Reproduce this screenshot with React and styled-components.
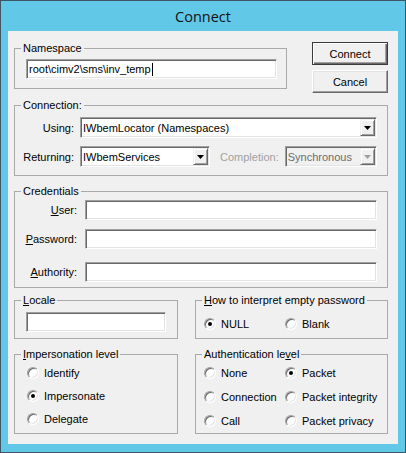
import React from 'react';
import styled, { createGlobalStyle } from 'styled-components';

const GlobalStyle = createGlobalStyle`
    body {
        margin: 0;
        font-family: "Liberation Sans", Arial, sans-serif;
        font-size: 11px;
        color: #000;
    }
`;

const Window = styled.div`
    width: 406px;
    height: 453px;
    box-sizing: border-box;
    border: 1px solid #3e5663;
    background: #62c8e8;
    display: flex;
    flex-direction: column;
`;

const TitleBar = styled.div`
    height: 30px;
    display: flex;
    align-items: center;
    justify-content: center;
    font-family: "Open Sans", "Noto Sans", sans-serif;
    font-size: 14.5px;
    color: #111;
`;

const Client = styled.div`
    flex: 1;
    margin: 0 7px 8px;
    background: #f0f0f0;
    padding: 11px 10px 0 6px;
    display: flex;
    flex-direction: column;
`;

const TopRow = styled.div`
    display: flex;
    align-items: flex-start;
    gap: 25px;
`;

const ButtonColumn = styled.div`
    display: flex;
    flex-direction: column;
    gap: 5px;
`;

const PushButton = styled.button`
    box-sizing: border-box;
    width: 76px;
    height: 23px;
    padding: 0;
    font-family: inherit;
    font-size: 11px;
    color: #000;
    background: #f0f0f0;
    border: 1px solid;
    border-color: ${(p) => (p.$default ? '#3a3a3a' : '#fff #696969 #696969 #fff')};
    box-shadow: ${(p) =>
        p.$default
            ? 'inset 1px 1px #fff, inset -1px -1px #696969, inset -2px -2px #a0a0a0'
            : 'inset -1px -1px #a0a0a0, inset 1px 1px #e3e3e3'};
`;

const Group = styled.fieldset`
    box-sizing: border-box;
    margin: ${(p) => p.$top || 0}px 0 0;
    padding: 0;
    min-width: 0;
    width: ${(p) => (p.$width ? `${p.$width}px` : 'auto')};
    border: 1px solid #a9a9a9;
`;

const Caption = styled.legend`
    margin-left: 6px;
    padding: 0 2px;
    line-height: 13px;
    white-space: nowrap;
`;

const Key = styled.span`
    text-decoration: underline;
    text-underline-offset: 1px;
`;

const TextBox = styled.div`
    box-sizing: border-box;
    width: ${(p) => (p.$width ? `${p.$width}px` : 'auto')};
    height: 20px;
    margin-top: ${(p) => p.$top || 0}px;
    padding: 0 2px;
    background: #fff;
    border: 1px solid;
    border-color: #a0a0a0 #fff #fff #a0a0a0;
    box-shadow: inset 1px 1px #696969, inset -1px -1px #e3e3e3;
    display: flex;
    align-items: center;
    white-space: nowrap;
    overflow: hidden;
`;

const Caret = styled.span`
    width: 1px;
    height: 13px;
    margin-left: 1px;
    background: #000;
`;

const NamespaceBody = styled.div`
    padding: 4px 0 9px 11px;
`;

const FormGrid = styled.div`
    display: grid;
    grid-template-columns: ${(p) => p.$label}px 1fr;
    column-gap: ${(p) => p.$gap}px;
    align-items: center;
    padding: ${(p) => p.$pad};
`;

const FieldLabel = styled.span`
    text-align: right;
    white-space: nowrap;
    margin-top: ${(p) => p.$top || 0}px;
    color: ${(p) => (p.$disabled ? '#a0a0a0' : '#000')};
`;

const Cell = styled.div`
    display: flex;
    align-items: center;
    margin-top: ${(p) => p.$top || 0}px;
`;

const Combo = styled.div`
    box-sizing: border-box;
    width: ${(p) => (p.$width ? `${p.$width}px` : 'auto')};
    flex: ${(p) => (p.$width ? 'none' : '1')};
    height: 21px;
    padding: 1px;
    display: flex;
    background: ${(p) => (p.$disabled ? '#f0f0f0' : '#fff')};
    color: ${(p) => (p.$disabled ? '#6d6d6d' : '#000')};
    border: 1px solid;
    border-color: #a0a0a0 #fff #fff #a0a0a0;
    box-shadow: inset 1px 1px #696969, inset -1px -1px #e3e3e3;
`;

const ComboValue = styled.span`
    flex: 1;
    display: flex;
    align-items: center;
    padding-left: 1px;
    white-space: nowrap;
    overflow: hidden;
`;

const ComboArrow = styled.span`
    box-sizing: border-box;
    width: 15px;
    display: flex;
    align-items: center;
    justify-content: center;
    background: #f0f0f0;
    border: 1px solid;
    border-color: #f0f0f0 #696969 #696969 #f0f0f0;
    box-shadow: inset 1px 1px #fff, inset -1px -1px #a0a0a0;
`;

const CompletionLabel = styled(FieldLabel)`
    margin: 0 6px 0 10px;
`;

const BottomRow = styled.div`
    display: grid;
    grid-template-columns: 164px 193px;
    column-gap: 17px;
    margin-top: ${(p) => p.$top}px;
`;

const LocaleBody = styled.div`
    padding: 5px 0 6px 11px;
`;

const RadioGrid = styled.div`
    display: grid;
    grid-template-columns: ${(p) => p.$cols};
    grid-auto-rows: 14px;
    row-gap: ${(p) => p.$gap || 0}px;
    padding: ${(p) => p.$pad};
`;

const RadioOption = styled.label`
    display: flex;
    align-items: center;
    gap: 5px;
    white-space: nowrap;
`;

const RadioDot = styled.span`
    box-sizing: border-box;
    flex: none;
    width: 12px;
    height: 12px;
    border-radius: 50%;
    background: #fff;
    border: 1px solid;
    border-color: #a0a0a0 #fff #fff #a0a0a0;
    box-shadow: inset 1px 1px #696969, inset -1px -1px #e3e3e3;
    display: flex;
    align-items: center;
    justify-content: center;

    &::after {
        content: '';
        display: ${(p) => (p.$checked ? 'block' : 'none')};
        width: 4px;
        height: 4px;
        border-radius: 50%;
        background: #000;
    }
`;

const DownArrow = ({ color = '#000' }) => (
    <svg width="7" height="4" viewBox="0 0 7 4">
        <path d="M0 0h7L3.5 4z" fill={color} />
    </svg>
);

const ComboBox = ({ value, width, disabled }) => (
    <Combo $width={width} $disabled={disabled}>
        <ComboValue>{value}</ComboValue>
        <ComboArrow>
            <DownArrow color={disabled ? '#a0a0a0' : '#000'} />
        </ComboArrow>
    </Combo>
);

const Radio = ({ checked, children }) => (
    <RadioOption>
        <RadioDot $checked={checked} />
        {children}
    </RadioOption>
);

const App = () => {
    return (
        <>
            <GlobalStyle />
            <Window>
                <TitleBar>Connect</TitleBar>
                <Client>
                    <TopRow>
                        <Group $width={274}>
                            <Caption>Namespace</Caption>
                            <NamespaceBody>
                                <TextBox $width={251}>
                                    root\cimv2\sms\inv_temp
                                    <Caret />
                                </TextBox>
                            </NamespaceBody>
                        </Group>
                        <ButtonColumn>
                            <PushButton $default>Connect</PushButton>
                            <PushButton>Cancel</PushButton>
                        </ButtonColumn>
                    </TopRow>

                    <Group $top={6}>
                        <Caption>Connection:</Caption>
                        <FormGrid $label={59} $gap={6} $pad="5px 10px 8px 0">
                            <FieldLabel>Using:</FieldLabel>
                            <Cell>
                                <ComboBox value="IWbemLocator (Namespaces)" />
                            </Cell>
                            <FieldLabel $top={8}>Returning:</FieldLabel>
                            <Cell $top={8}>
                                <ComboBox value="IWbemServices" width={130} />
                                <CompletionLabel $disabled>Completion:</CompletionLabel>
                                <ComboBox value="Synchronous" disabled />
                            </Cell>
                        </FormGrid>
                    </Group>

                    <Group $top={9}>
                        <Caption>Credentials</Caption>
                        <FormGrid $label={62} $gap={8} $pad="2px 10px 5px 0">
                            <FieldLabel><Key>U</Key>ser:</FieldLabel>
                            <TextBox />
                            <FieldLabel $top={9}><Key>P</Key>assword:</FieldLabel>
                            <TextBox $top={9} />
                            <FieldLabel $top={13}><Key>A</Key>uthority:</FieldLabel>
                            <TextBox $top={13} />
                        </FormGrid>
                    </Group>

                    <BottomRow $top={6}>
                        <Group>
                            <Caption><Key>L</Key>ocale</Caption>
                            <LocaleBody>
                                <TextBox $width={140} />
                            </LocaleBody>
                        </Group>
                        <Group>
                            <Caption><Key>H</Key>ow to interpret empty password</Caption>
                            <RadioGrid $cols="81px auto" $pad="10px 0 7px 8px">
                                <Radio checked>NULL</Radio>
                                <Radio>Blank</Radio>
                            </RadioGrid>
                        </Group>
                    </BottomRow>

                    <BottomRow $top={9}>
                        <Group>
                            <Caption><Key>I</Key>mpersonation level</Caption>
                            <RadioGrid $cols="auto" $gap={9} $pad="5px 0 7px 12px">
                                <Radio>Identify</Radio>
                                <Radio checked>Impersonate</Radio>
                                <Radio>Delegate</Radio>
                            </RadioGrid>
                        </Group>
                        <Group>
                            <Caption>Authentication le<Key>v</Key>el</Caption>
                            <RadioGrid $cols="81px auto" $gap={10} $pad="5px 0 5px 8px">
                                <Radio>None</Radio>
                                <Radio checked>Packet</Radio>
                                <Radio>Connection</Radio>
                                <Radio>Packet integrity</Radio>
                                <Radio>Call</Radio>
                                <Radio>Packet privacy</Radio>
                            </RadioGrid>
                        </Group>
                    </BottomRow>
                </Client>
            </Window>
        </>
    );
};

export default App;
